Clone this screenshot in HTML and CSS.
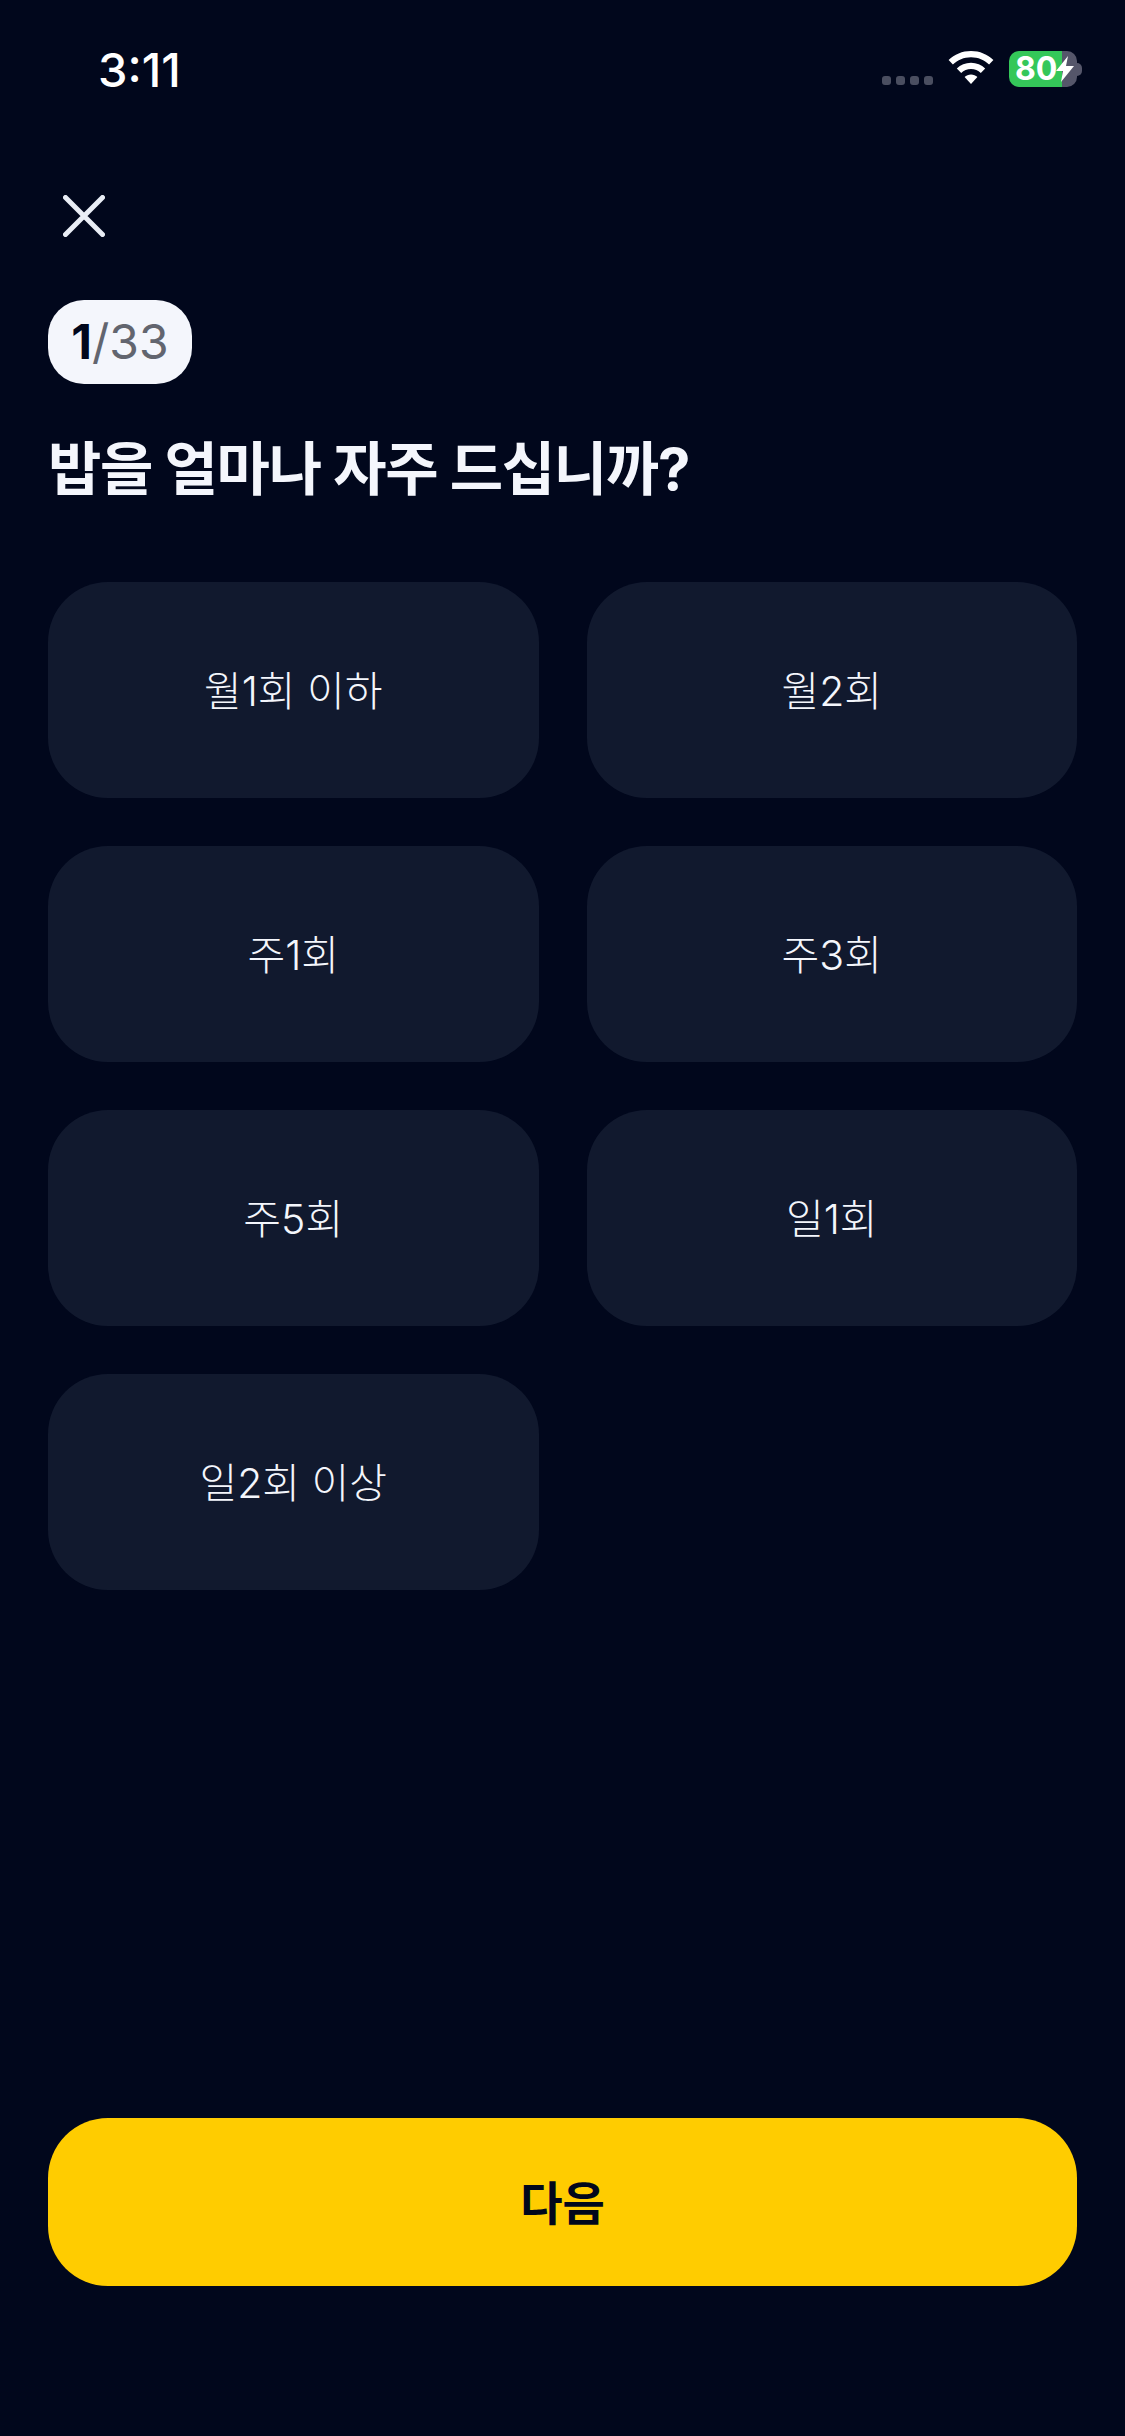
FILE: index.html
```html
<!DOCTYPE html>
<html lang="ko">
<head>
<meta charset="utf-8">
<title>설문</title>
<link rel="stylesheet" href="styles.css">
</head>
<body>
<main class="screen">
  <header class="status">
    <span class="time">3:11</span>
    <div class="status-icons">
      <div class="signal"><i></i><i></i><i></i><i></i></div>
      <svg class="wifi" viewBox="0 0 46 34" width="46" height="34"><path fill="#fff" d="M23 0C14.300 0 6.400 3.400.6 9l4.300 4.500C9.600 9 16 6.200 23 6.200s13.400 2.800 18.100 7.300L45.400 9C39.600 3.400 31.700 0 23 0z"/><path fill="#fff" d="M23 11.800c-5.500 0-10.500 2.200-14.200 5.700l4.400 4.500c2.600-2.400 6-3.900 9.800-3.900s7.200 1.500 9.800 3.900l4.400-4.500c-3.700-3.500-8.700-5.700-14.200-5.700z"/><path fill="#fff" d="M23 23.500c-2.500 0-4.700 1-6.400 2.500L23 33l6.400-7c-1.700-1.500-3.900-2.500-6.400-2.500z"/></svg>
      <div class="battery">
        <div class="battery-body"><span class="battery-text">80</span>
          <svg class="bolt" viewBox="0 0 18 26" width="18" height="26"><path fill="#fff" d="M12 0 0 15h7L5 26 18 10h-8z"/></svg>
        </div>
        <div class="battery-cap"></div>
      </div>
    </div>
  </header>

  <button class="close" type="button" aria-label="닫기">
    <svg viewBox="0 0 42 42" width="42" height="42"><path d="M2.500 2.500 39.500 39.500M39.500 2.500 2.500 39.500" stroke="#e9edf5" stroke-width="5" stroke-linecap="round" fill="none"/></svg>
  </button>

  <div class="badge"><b>1</b><span>/33</span></div>
  <h1 class="question">밥을 얼마나 자주 드십니까?</h1>

  <div class="options">
    <button class="option" type="button">월1회 이하</button>
    <button class="option" type="button">월2회</button>
    <button class="option" type="button">주1회</button>
    <button class="option" type="button">주3회</button>
    <button class="option" type="button">주5회</button>
    <button class="option" type="button">일1회</button>
    <button class="option" type="button">일2회 이상</button>
  </div>

  <button class="next" type="button">다음</button>
</main>
</body>
</html>
```
FILE: styles.css
```css
* { box-sizing: border-box; }
html, body { margin: 0; padding: 0; }
body {
  width: 1125px;
  height: 2436px;
  background: #01071c;
  font-family: "Inter", "Noto Sans CJK KR", sans-serif;
  overflow: hidden;
}
.screen {
  display: flex;
  flex-direction: column;
  height: 2436px;
  padding: 0 48px;
}
.status {
  display: flex;
  justify-content: space-between;
  align-items: center;
  height: 136px;
  padding: 2px 0 0 50px;
  margin-right: -5px;
}
.time {
  color: #fff;
  font-size: 47px;
  font-weight: 500;
  line-height: 1;
}
.status-icons {
  display: flex;
  align-items: flex-end;
  height: 36px;
}
.signal { display: flex; gap: 5px; margin-right: 15px; margin-bottom: 2px; }
.signal i {
  width: 9px;
  height: 9px;
  border-radius: 3px;
  background: #4a4e60;
}
.wifi { margin-bottom: 2px; }
.battery { display: flex; align-items: center; margin-left: 15px; }
.battery-body {
  display: flex;
  align-items: center;
  width: 68px;
  height: 36px;
  padding-left: 6px;
  border-radius: 10px;
  background: linear-gradient(to right, #34c759 53px, #55566a 53px);
}
.battery-text {
  color: #fff;
  font-size: 32px;
  font-weight: 700;
  line-height: 1;
}
.bolt { margin-left: -1px; }
.battery-cap {
  width: 5px;
  height: 13px;
  border-radius: 0 5px 5px 0;
  background: #55566a;
}
.close {
  align-self: flex-start;
  display: flex;
  width: 42px;
  height: 42px;
  margin: 59px 0 0 15px;
  padding: 0;
  border: 0;
  background: none;
}
.badge {
  align-self: flex-start;
  display: flex;
  align-items: center;
  justify-content: center;
  width: 144px;
  height: 84px;
  margin-top: 63px;
  border-radius: 36px;
  background: #f4f6fc;
  font-size: 48px;
  line-height: 1;
}
.badge b { color: #01071c; font-weight: 700; }
.badge span { color: #62656f; font-weight: 400; }
.question {
  margin: 49px 0 0;
  color: #f4f6fc;
  font-size: 58px;
  font-weight: 700;
  line-height: 72px;
  letter-spacing: -1.3px;
}
.options {
  display: grid;
  grid-template-columns: 1fr 1fr;
  grid-auto-rows: 216px;
  gap: 48px;
  margin-top: 77px;
}
.option {
  padding: 0 0 4px;
  border: 0;
  border-radius: 60px;
  background: #11192e;
  color: #f4f6fc;
  font-family: inherit;
  font-size: 41px;
  font-weight: 300;
}
.next {
  height: 168px;
  margin-top: auto;
  margin-bottom: 150px;
  padding: 0 0 5px;
  border: 0;
  border-radius: 60px;
  background: #ffcc00;
  color: #01071c;
  font-family: inherit;
  font-size: 46px;
  font-weight: 700;
}
```
